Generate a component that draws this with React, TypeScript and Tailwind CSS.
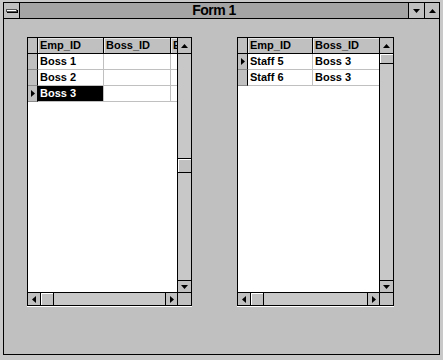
import React from "react";

type Col = { w: string; label: string };

const Tri = ({ dir }: { dir: "up" | "down" | "left" | "right" }) => {
  const pts = {
    up: "3.5,1 0,5 7,5",
    down: "0,1 7,1 3.5,5",
    left: "1,3.5 5,0 5,7",
    right: "1,0 1,7 5,3.5",
  }[dir];
  const vert = dir === "up" || dir === "down";
  return (
    <svg width={vert ? 7 : 6} height={vert ? 6 : 7} viewBox={vert ? "0 0 7 6" : "0 0 6 7"}>
      <polygon points={pts} fill="#000" />
    </svg>
  );
};

const cellText = "text-[11px] font-bold leading-[15px] pl-[2px] whitespace-nowrap overflow-hidden";

const Grid = ({
  w,
  cols,
  rows,
  cur,
  sel,
  thumb,
  hRight,
}: {
  w: string;
  cols: Col[];
  rows: string[][];
  cur: number;
  sel?: number;
  thumb: string;
  hRight: string;
}) => (
  <div className={`${w} h-[269px] border border-black bg-white flex shrink-0 shadow-[0_1px_0_#fff]`}>
    <div className="flex-1 flex flex-col min-w-0">
      {/* header */}
      <div className="h-[16px] flex border-b border-black bg-[#c0c0c0] shrink-0">
        <div className="w-[10px] shrink-0 border-r border-black" />
        {cols.map((c, i) => (
          <div
            key={c.label + i}
            className={`${c.w} shrink-0 ${i < cols.length - 1 ? "border-r border-black" : ""} ${cellText} shadow-[inset_1px_1px_0_#e8e8e8]`}
          >
            {c.label}
          </div>
        ))}
      </div>
      {/* rows */}
      <div className="flex-1 flex flex-col">
        {rows.map((r, ri) => (
          <div key={ri} className="h-[16px] flex shrink-0">
            <div className="w-[10px] shrink-0 bg-[#c0c0c0] border-r border-black border-b border-b-[#8a8a8a] flex items-center pl-[2px]">
              {ri === cur && <Tri dir="right" />}
            </div>
            {cols.map((c, ci) => (
              <div
                key={ci}
                className={`${c.w} shrink-0 border-b border-[#c0c0c0] ${ci < cols.length - 1 ? "border-r" : ""} ${cellText} ${
                  sel === ri && ci === 0 ? "bg-black text-white" : "text-black"
                }`}
              >
                {r[ci] ?? ""}
              </div>
            ))}
          </div>
        ))}
      </div>
      {/* horizontal scrollbar */}
      <div className="h-[13px] border-t border-black flex bg-[#c8c8c8] shrink-0">
        <div className="w-[13px] border-r border-black bg-[#c0c0c0] flex items-center justify-center">
          <Tri dir="left" />
        </div>
        <div className="w-[13px] border-r border-black bg-[#c0c0c0] shadow-[inset_1px_1px_0_#fff]" />
        <div className="flex-1" />
        <div className={`${hRight} border-l border-black bg-[#c0c0c0] flex items-center justify-center`}>
          <Tri dir="right" />
        </div>
      </div>
    </div>
    {/* vertical scrollbar */}
    <div className="w-[14px] border-l border-black flex flex-col bg-[#c8c8c8] shrink-0">
      <div className="h-[16px] border-b border-black bg-[#c0c0c0] flex items-center justify-center shrink-0">
        <Tri dir="up" />
      </div>
      <div className="flex-1 flex flex-col">
        <div className={`${thumb} border-black bg-[#c0c0c0] shadow-[inset_1px_1px_0_#fff]`} />
      </div>
      <div className="h-[12px] border-t border-black bg-[#c0c0c0] flex items-center justify-center shrink-0">
        <Tri dir="down" />
      </div>
      <div className="h-[13px] border-t border-black bg-[#c0c0c0] shrink-0" />
    </div>
  </div>
);

export default function App() {
  return (
    <div className="w-[443px] h-[360px] bg-[#c8c8c8] pt-[2px] px-[3px] pb-[5px] flex font-['Liberation_Sans',Arial,sans-serif] text-black">
      <div className="flex-1 border border-black flex flex-col bg-[#c0c0c0]">
        {/* title bar */}
        <div className="h-[16px] flex border-b border-black bg-[#a4a4a4] shrink-0">
          <div className="w-[16px] border-r border-black bg-[#c0c0c0] flex items-center justify-center">
            <div className="w-[11px] h-[3px] bg-white border border-[#555] shadow-[1px_1px_0_#000]" />
          </div>
          <div className="flex-1 text-center font-bold text-[14px] leading-[15px] tracking-[-0.5px]">Form 1</div>
          <div className="w-[16px] border-l border-black bg-[#c0c0c0] flex items-center justify-center">
            <Tri dir="down" />
          </div>
          <div className="w-[15px] border-l border-black bg-[#c0c0c0] flex items-center justify-center">
            <Tri dir="up" />
          </div>
        </div>
        {/* client */}
        <div className="flex-1 flex items-start pl-[23px] pt-[18px] gap-[45px]">
          <Grid
            w="w-[165px]"
            cols={[
              { w: "w-[66px]", label: "Emp_ID" },
              { w: "w-[67px]", label: "Boss_ID" },
              { w: "w-[6px]", label: "Emp" },
            ]}
            rows={[["Boss 1"], ["Boss 2"], ["Boss 3"]]}
            cur={2}
            sel={2}
            thumb="mt-[104px] h-[15px] border-y"
            hRight="w-[12px]"
          />
          <Grid
            w="w-[157px]"
            cols={[
              { w: "w-[65px]", label: "Emp_ID" },
              { w: "w-[67px]", label: "Boss_ID" },
            ]}
            rows={[
              ["Staff 5", "Boss 3"],
              ["Staff 6", "Boss 3"],
            ]}
            cur={0}
            thumb="h-[10px] border-b"
            hRight="w-[12px]"
          />
        </div>
      </div>
    </div>
  );
}
